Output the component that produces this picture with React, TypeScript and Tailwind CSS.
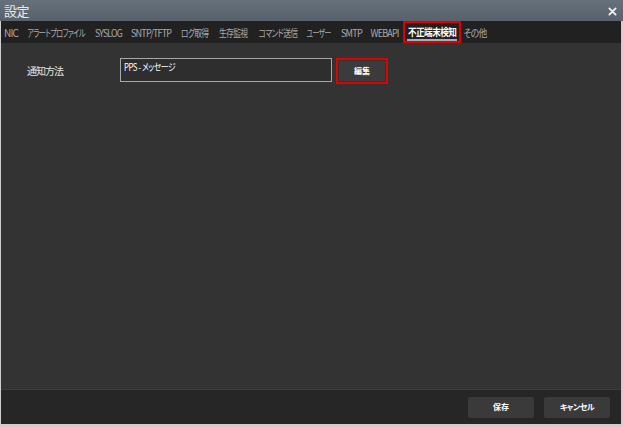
type Tab = { label: string; slot: string; fit: string; active?: boolean };

// slot = width + left gap taken from the reference, fit = horizontal squeeze of the label
const tabs: Tab[] = [
  { label: "NIC", slot: "w-[14px] ml-[3px]", fit: "scale-x-[1]" },
  { label: "アラートプロファイル", slot: "w-[58px] ml-[9px]", fit: "scale-x-[0.72]" },
  { label: "SYSLOG", slot: "w-[28px] ml-[9px]", fit: "scale-x-[0.87]" },
  { label: "SNTP/TFTP", slot: "w-[40px] ml-[9px]", fit: "scale-x-[0.91]" },
  { label: "ログ取得", slot: "w-[28px] ml-[10px]", fit: "scale-x-[0.78]" },
  { label: "生存監視", slot: "w-[29px] ml-[10px]", fit: "scale-x-[0.78]" },
  { label: "コマンド送信", slot: "w-[39px] ml-[10px]", fit: "scale-x-[0.78]" },
  { label: "ユーザー", slot: "w-[24px] ml-[10px]", fit: "scale-x-[0.69]" },
  { label: "SMTP", slot: "w-[22px] ml-[9px]", fit: "scale-x-[0.92]" },
  { label: "WEBAPI", slot: "w-[29px] ml-[8px]", fit: "scale-x-[0.9]" },
  { label: "不正端末検知", slot: "w-[58px] ml-[4px]", fit: "scale-x-[0.86]", active: true },
  { label: "その他", slot: "w-[22px] ml-[3px]", fit: "scale-x-[0.88]" },
];

export default function App() {
  return (
    <div
      className="w-[623px] h-[427px] bg-[#cfcfcf] pl-px pr-[2px] pb-[3px] flex flex-col overflow-hidden"
      style={{ fontFamily: '"Noto Sans CJK JP", "Liberation Sans", sans-serif', fontFeatureSettings: '"palt"' }}
    >
      {/* title bar */}
      <div className="h-[21px] -ml-px -mr-[2px] flex items-center justify-between pl-[4px] pr-[6px] bg-gradient-to-b from-[#67717c] to-[#57616b]">
        <span className="text-[13px] leading-none text-[#e8e8e8] tracking-[-0.5px]">設定</span>
        <svg width="9" height="9" viewBox="0 0 10 10" className="mt-[2px]">
          <path d="M1.5 1.5 L8.5 8.5 M8.5 1.5 L1.5 8.5" stroke="#f2f2f2" strokeWidth="2" strokeLinecap="round" />
        </svg>
      </div>

      <div className="flex-1 flex flex-col bg-[#333333]">
        {/* tabs */}
        <div className="h-[22px] bg-[#212121] flex items-stretch text-[10px] tracking-[-0.9px] whitespace-nowrap">
          {tabs.map((t) => (
            <div
              key={t.label}
              className={
                t.slot +
                (t.active
                  ? " relative shrink-0 flex items-center justify-center pb-[2px] border-2 border-[#e00000] text-white font-bold"
                  : " shrink-0 flex items-center justify-center text-[#a9a9a9]")
              }
            >
              <span className={"inline-block origin-center " + t.fit + (t.active ? " tracking-[-0.6px]" : "")}>
                {t.label}
              </span>
              {t.active && <div className="absolute left-[2px] right-[2px] bottom-0 h-[2px] bg-[#9fb0bf]" />}
            </div>
          ))}
        </div>

        {/* content */}
        <div className="flex-1 flex items-start pt-[15px] pl-[26px]">
          <div className="w-[93px] pt-[5px] text-[10px] text-[#e6e6e6] tracking-[-1px]">通知方法</div>
          <div className="w-[212px] h-[24px] border border-[#a8a8a8] bg-[#2e2e2e] px-[3px] pt-[2px] text-[10px] leading-[12px] text-white tracking-[-0.6px] whitespace-nowrap">
            <span className="inline-block origin-left scale-x-[0.78]">PPS - メッセージ</span>
          </div>
          <div className="ml-[4px] w-[52px] h-[26px] border-2 border-[#e00000] p-[1px]">
            <div className="w-full h-full bg-[#3b3b3b] flex items-center justify-center text-[8px] font-bold text-white">
              編集
            </div>
          </div>
        </div>

        {/* footer */}
        <div className="h-[35px] bg-[#262626] border-t border-[#3c3c3c] flex items-center justify-end gap-[10px] pr-[11px]">
          <button className="w-[66px] h-[21px] rounded-[2px] bg-[#3a3a3a] text-[8px] font-bold text-white">保存</button>
          <button className="w-[66px] h-[21px] rounded-[2px] bg-[#3a3a3a] text-[8px] font-bold text-white tracking-[-0.5px]">
            キャンセル
          </button>
        </div>
      </div>
    </div>
  );
}
